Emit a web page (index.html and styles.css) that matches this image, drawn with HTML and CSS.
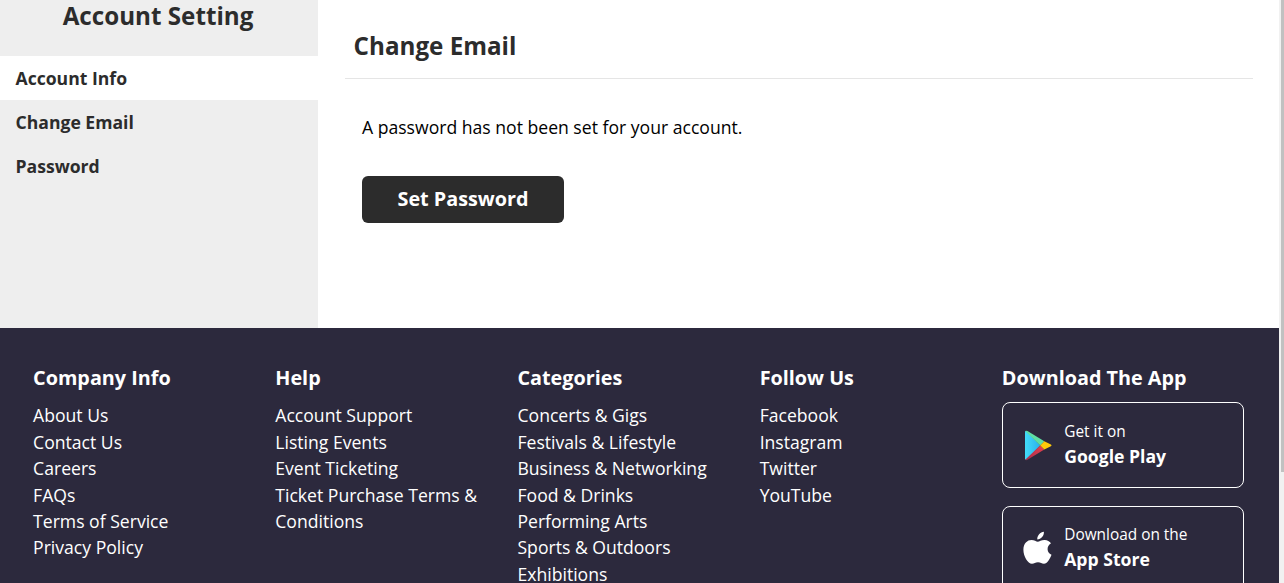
FILE: index.html
```html
<!DOCTYPE html>
<html lang="en">
<head>
<meta charset="utf-8">
<title>Account Setting</title>
<link rel="stylesheet" href="styles.css">
</head>
<body>
<div class="page">
  <div class="account">
    <aside class="sidebar">
      <h2 class="sidebar-title">Account Setting</h2>
      <nav class="menu">
        <a class="menu-item active">Account Info</a>
        <a class="menu-item">Change Email</a>
        <a class="menu-item">Password</a>
      </nav>
    </aside>
    <main class="content">
      <h2 class="content-title">Change Email</h2>
      <p class="message">A password has not been set for your account.</p>
      <button class="button">Set Password</button>
    </main>
  </div>
  <footer class="footer">
    <section class="column">
      <h3 class="column-title">Company Info</h3>
      <a>About Us</a><a>Contact Us</a><a>Careers</a><a>FAQs</a><a>Terms of Service</a><a>Privacy Policy</a>
    </section>
    <section class="column">
      <h3 class="column-title">Help</h3>
      <a>Account Support</a><a>Listing Events</a><a>Event Ticketing</a><a>Ticket Purchase Terms &amp; Conditions</a>
    </section>
    <section class="column">
      <h3 class="column-title">Categories</h3>
      <a>Concerts &amp; Gigs</a><a>Festivals &amp; Lifestyle</a><a>Business &amp; Networking</a><a>Food &amp; Drinks</a><a>Performing Arts</a><a>Sports &amp; Outdoors</a><a>Exhibitions</a>
    </section>
    <section class="column">
      <h3 class="column-title">Follow Us</h3>
      <a>Facebook</a><a>Instagram</a><a>Twitter</a><a>YouTube</a>
    </section>
    <section class="column">
      <h3 class="column-title apps-title">Download The App</h3>
      <div class="store">
        <svg class="store-icon" viewBox="0 0 30 34">
          <defs>
            <linearGradient id="blue" x1="0" x2="1"><stop offset="0" stop-color="#42dcf8"/><stop offset="1" stop-color="#2bb0ee"/></linearGradient>
            <linearGradient id="red" x1="1" y1="0" x2="0" y2="1"><stop offset="0" stop-color="#e8434f"/><stop offset="1" stop-color="#a52a4a"/></linearGradient>
          </defs>
          <path fill="url(#blue)" d="M2 4.2Q2 2.8 3 3L17.2 17.4 3 31.8Q2 32 2 30.6Z"/>
          <path fill="#5fdea4" d="M2.2 3Q3 2.3 4.5 3.1L21.3 13.2 17.2 17.4Z"/>
          <path fill="url(#red)" d="M2.2 31.8Q3 32.500 4.500 31.700L21.300 21.600 17.200 17.400Z"/>
          <path fill="#ffca0a" d="M21.300 13.200L27.900 16.600Q29.400 17.400 27.900 18.200L21.300 21.600 17.200 17.400Z"/>
        </svg>
        <div class="store-text"><span class="store-note">Get it on</span><b>Google Play</b></div>
      </div>
      <div class="store">
        <svg class="store-icon apple" viewBox="0 0 30 34">
          <path fill="#fff" d="M20.900.800C21.200 4.800 18 8.400 14.300 8.500 13.900 4.800 17.400 1.100 20.900.800ZM28 12.300C23.200 15.300 23.600 21.500 28.500 23.800 27.100 27.900 24.200 32.700 21 32.800 18.600 32.800 17.800 31.300 15 31.300S11.300 32.800 9 32.800C4.800 32.700.400 25.100.400 18.700.400 12.300 4.400 9 8.500 9 11.200 9 13.300 10.700 14.800 10.700 16.300 10.700 18.700 8.800 21.800 9 24.300 9.100 26.600 10.200 28 12.300Z"/>
        </svg>
        <div class="store-text apple-text"><span class="store-note">Download on the</span><b>App Store</b></div>
      </div>
    </section>
  </footer>
</div>
<div class="scroll-track"><div class="scroll-thumb"></div></div>
</body>
</html>
```
FILE: styles.css
```css
* { box-sizing: border-box; }
body {
  margin: 0;
  height: 583px;
  overflow: hidden;
  display: flex;
  background: #fff;
  color: #000;
  font: 17.6px/26.4px "Open Sans", sans-serif;
}
h2, h3, p { margin: 0; }
.page { width: 1279px; flex: none; }
.account { display: flex; height: 328px; }
.sidebar { width: 318px; background: #eee; color: #2c2c2c; }
.sidebar-title {
  height: 56px;
  padding-right: 2px;
  font-size: 24.2px;
  line-height: 32px;
  font-weight: 700;
  text-align: center;
}
.menu-item {
  display: block;
  height: 44px;
  padding-left: 15.5px;
  line-height: 44px;
  font-weight: 700;
}
.active { background: #fff; }
.content { width: 908px; margin-left: 27px; }
.content-title {
  height: 79px;
  padding: 30px 0 0 8.6px;
  border-bottom: 1px solid #e5e5e5;
  color: #2c2c2c;
  font-size: 24.2px;
  line-height: 32px;
}
.message { padding: 35px 17px 0; }
.button {
  display: block;
  width: 202px;
  height: 47px;
  margin: 36px 0 0 17px;
  padding: 0 0 1px;
  border: 0;
  border-radius: 6px;
  background: #2c2c2c;
  color: #fff;
  font: 700 19.8px/28px "Open Sans", sans-serif;
}
.footer {
  display: grid;
  grid-template-columns: repeat(5, 242.2px);
  height: 255px;
  padding: 35px 0 0 33.1px;
  overflow: hidden;
  background: #2c293d;
  color: #fff;
}
.column a { display: block; width: 210px; }
.column-title { height: 39.4px; font-size: 19.8px; line-height: 29px; }
.apps-title { height: 39px; }
.store {
  display: flex;
  align-items: center;
  width: 242px;
  height: 86px;
  margin-bottom: 18px;
  padding-left: 20.4px;
  border: 1px solid #fff;
  border-radius: 8px;
}
.store-icon { flex: none; width: 30px; height: 34px; }
.apple { margin-bottom: 2px; }
.store-text { margin-left: 11px; padding-bottom: 2px; line-height: 25px; }
.apple-text { padding-bottom: 4px; }
.store-note { display: block; font-size: 15.4px; }
.scroll-track { width: 5px; height: 583px; padding-left: 2px; background: #f1f1f1; }
.scroll-thumb { height: 472px; background: #c1c1c1; }
```
